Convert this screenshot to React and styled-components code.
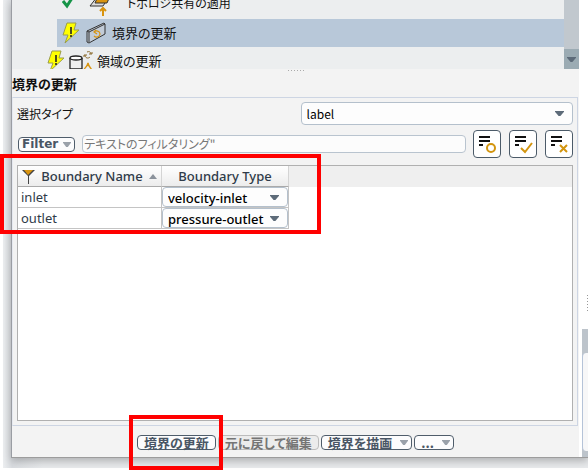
import React from 'react'
import styled, { createGlobalStyle, css } from 'styled-components'

const GlobalStyle = createGlobalStyle`
  * { box-sizing: border-box; }
  body {
    margin: 0;
    background: #fff;
    color: #111;
    font: 13px/20px 'Noto Sans', 'Noto Sans CJK JP', sans-serif;
    overflow: hidden;
  }
  button, input, select { font: inherit; margin: 0; }
`

const jp = css`
  font-family: 'Noto Sans CJK JP', sans-serif;
  font-feature-settings: 'palt';
`

const Page = styled.div`
  position: relative;
  padding: 0 0 2px 3px;
`

const Backdrop = styled.div`
  padding: 0 0 10px 8px;
  background: linear-gradient(90deg, #eceef0, #d9dce0 9px, #e8eaec 40px);
`

const Window = styled.div`
  display: flex;
  border-left: 1px solid #9a9da3;
  border-bottom: 1px solid #9c9c9c;
  background: #fff;
  box-shadow: 0 3px 8px rgba(0, 0, 0, 0.25);
`

const Main = styled.main`
  flex: 1;
  min-width: 0;
  background: #f3f3f3;
`

const TreeArea = styled.div`
  display: flex;
  height: 69px;
  overflow: hidden;
  background: #eceeef;
`

const TreeList = styled.ul`
  flex: 1;
  margin: -13px 0 0;
  padding: 0;
  list-style: none;
`

const TreeItem = styled.li`
  display: flex;
  align-items: center;
  height: ${p => (p.$tall ? 32 : 28)}px;
  margin-left: ${p => p.$indent}px;
  padding-left: 5px;
  gap: ${p => p.$gap || 4}px;
  background: ${p => (p.$selected ? '#b8c8d9' : 'none')};
  white-space: nowrap;
  ${jp}
  font-size: ${p => (p.$tall ? 12 : 13)}px;
  svg { flex: none; }
`

const Scroll = styled.div`
  display: flex;
  flex-direction: column;
  justify-content: flex-end;
  width: 15px;
  background: #c1c8ce;
`

const ScrollDown = styled.button`
  display: flex;
  align-items: center;
  justify-content: center;
  height: 20px;
  padding: 0;
  border: 0;
  background: #9babb3;
`

const Splitter = styled.div`
  display: flex;
  justify-content: center;
  gap: 2px;
  height: 5px;
  padding-top: 1px;
  i { width: 1px; height: 1px; background: #aaa; }
`

const Title = styled.h1`
  margin: 0;
  height: 23px;
  font-size: 13px;
  font-weight: 700;
  line-height: 20px;
  ${jp}
`

const Group = styled.section`
  margin-right: 1px;
  padding: 4px;
  border: 1px solid #cdd5e3;
  border-left-color: #e6e9f0;
`

const Field = styled.div`
  display: flex;
  align-items: center;
  justify-content: space-between;
  font-size: 12px;
  label { ${jp} }
  select { font-family: 'Noto Sans CJK JP', sans-serif; }
`

const SelectWrap = styled.div`
  display: flex;
  align-items: center;
  width: ${p => p.$width || '100%'};
  height: ${p => p.$height}px;
  padding-right: ${p => p.$end}px;
  border: 1px solid #b4c0cc;
  border-radius: 4px;
  background: #fdfdfd;
  select {
    flex: 1;
    min-width: 0;
    height: 100%;
    padding: 0 0 0 5px;
    border: 0;
    outline: 0;
    appearance: none;
    background: none;
    color: #000;
    font-weight: ${p => p.$weight || 400};
  }
`

const FilterRow = styled.div`
  display: flex;
  align-items: center;
  gap: 7px;
  margin: 5px 0 7px;
  padding-left: 1px;
`

const PillButton = styled.button`
  display: flex;
  align-items: center;
  justify-content: center;
  gap: ${p => (p.$latin ? 5 : 8)}px;
  height: 15px;
  padding: 0 ${p => (p.$menu ? 3 : 6)}px 0 ${p => (p.$latin ? 3 : 6)}px;
  border: 1px solid #4f5d6b;
  border-radius: 4px;
  background: #fcfcfd;
  color: #4a5665;
  ${jp}
  font-family: ${p => (p.$latin ? "'DejaVu Sans'" : "'Noto Sans CJK JP'")}, sans-serif;
  font-size: ${p => (p.$latin ? 12 : 13)}px;
  font-weight: 700;
  line-height: 13px;
  white-space: nowrap;
  &:disabled {
    border-color: #bcbcbc;
    background: #ececec;
    color: #757575;
  }
`

const FilterInput = styled.input`
  flex: 1;
  min-width: 0;
  height: 18px;
  padding: 0 1px;
  border: 1px solid #b9c4cf;
  border-radius: 4px;
  background: #fcfcfc;
  && {
    ${jp}
    font-size: 12px;
  }
  &::placeholder { color: #777; opacity: 1; }
`

const Tools = styled.div`
  display: flex;
  gap: 8px;
`

const ToolButton = styled.button`
  width: 28px;
  height: 28px;
  padding: 0;
  border: 1px solid #4c5b69;
  border-radius: 4px;
  background: #fff;
  svg { display: block; }
`

const TableBox = styled.div`
  height: 256px;
  border: 1px solid #b0b0b0;
  background: linear-gradient(#efefef 21px, #fff 21px);
`

const Table = styled.table`
  width: 271px;
  table-layout: fixed;
  border-collapse: separate;
  border-spacing: 0;
  color: #2f3b49;
  th, td {
    height: 21px;
    padding: 0;
    border-right: 1px solid #c4c4c4;
    border-bottom: 1px solid #c4c4c4;
    line-height: 20px;
  }
  th {
    border-right-color: #d4d4d4;
    border-bottom-color: #aaa;
    background: linear-gradient(#fff, #ececec);
    font-weight: 500;
  }
  th:first-child { width: 144px; }
  td:first-child { padding-left: 3px; }
  td { background: #fff; }
`

const HeadCell = styled.div`
  display: flex;
  align-items: center;
  justify-content: space-between;
  height: 20px;
  padding: 0 4px;
`

const Footer = styled.footer`
  display: flex;
  justify-content: center;
  gap: 2px;
  padding: 9px 0 7px;
`

const Side = styled.aside`
  display: flex;
  flex-direction: column;
  justify-content: flex-end;
  width: 9px;
  padding-left: 3px;
`

const SideHandle = styled.div`
  display: flex;
  flex-direction: column;
  align-items: flex-end;
  gap: 2px;
  margin-bottom: 18px;
  i { width: 1px; height: 1px; background: #999; }
`

const SidePanel = styled.div`
  padding: 24px 0 6px;
  background: #bdc4cb;
  div {
    height: 98px;
    border-left: 1px solid #b5c3d8;
    border-radius: 4px 0 0 4px;
    background: #f7f7f8;
  }
`

// red frames drawn over the window
const Highlight = styled.div`
  position: absolute;
  left: ${p => p.$x}px;
  top: ${p => p.$y}px;
  width: ${p => p.$w}px;
  height: ${p => p.$h}px;
  border: 4px solid #f00;
  pointer-events: none;
`

const Arrow = ({ color = '#5d6b79', w = 9, up }) => (
  <svg width={w} height="5" viewBox="0 0 10 6" preserveAspectRatio="none">
    <path d={up ? 'M0 6 5 0l5 6z' : 'M0 0h10v1L6 6H4L0 1z'} fill={color} />
  </svg>
)

const Bolt = () => (
  <svg width="18" height="22" viewBox="0 0 18 22">
    <path d="M5 1h9l-2 7h5L3 21l3-8H1z" fill="#ff0" stroke="#9a9d4c" strokeWidth="1" />
    <path d="M9 5v7M9 13v2" stroke="#222" strokeWidth="1.6" />
  </svg>
)

const CheckIcon = () => (
  <svg width="13" height="22" viewBox="0 0 13 22">
    <path d="m1 9 4 5 7-11" fill="none" stroke="#159447" strokeWidth="3" />
  </svg>
)

const TopologyIcon = () => (
  <svg width="24" height="28" viewBox="0 0 24 28">
    <path d="M1 17 8 8h12l-6 9z" fill="#ddd" stroke="#333" />
    <path d="M6 14 10 5h12l-4 9z" fill="#d9940f" stroke="#333" />
    <path d="M14 27v-7M11 22l3-3 3 3" fill="none" stroke="#d9940f" strokeWidth="2" />
  </svg>
)

const BoundaryIcon = () => (
  <svg width="22" height="24" viewBox="0 0 22 24">
    <path d="M2 10 19 2l1 1v10L4 22l-2-1z" fill="#c2ccd8" stroke="#333" />
    <path d="M2 10l2 1L20 3M4 11v10" fill="none" stroke="#333" />
    <path d="M9 11c2-2 6-1 6 2s-4 4-6 2M11 9l-2 2 3 2" fill="none" stroke="#d9940f" strokeWidth="1.2" />
  </svg>
)

const RegionIcon = () => (
  <svg width="24" height="24" viewBox="0 0 24 24">
    <path d="M1 9v11h12V9" fill="#eee" stroke="#222" strokeWidth="1.3" />
    <ellipse cx="7" cy="9" rx="6" ry="2" fill="#fff" stroke="#222" strokeWidth="1.3" />
    <path d="M18 3c2-1 4 0 4 2M20 5h3V3M16 6c0 3 3 4 5 2M15 8V6h3" fill="none" stroke="#8a6a2c" />
    <path d="M15 22c0-4 3-3 4-8 1 5 3 4 4 8" fill="none" stroke="#d9940f" strokeWidth="1.4" />
  </svg>
)

const FunnelIcon = () => (
  <svg width="13" height="15" viewBox="0 0 13 15">
    <path d="M0 1h13L7 7v8H6V7z" fill="#444" />
    <path d="M2 1h9L6 6z" fill="#d9940f" />
  </svg>
)

const marks = {
  circle: <circle cx="17" cy="17" r="4" />,
  check: <path d="m11 17 4 4 7-9" />,
  cross: <path d="m14 14 7 7M21 14l-7 7" />,
}

const ListIcon = ({ mark }) => (
  <svg width="26" height="26" viewBox="0 0 26 26">
    <path d="M5 6h11M5 10h11M5 14h4" stroke="#111" strokeWidth="2" />
    <g fill="none" stroke="#d3950f" strokeWidth="2">{marks[mark]}</g>
  </svg>
)

const dots = [0, 1, 2, 3, 4, 5]

const tools = [
  { mark: 'circle', label: 'Clear selection' },
  { mark: 'check', label: 'Select all' },
  { mark: 'cross', label: 'Deselect all' },
]

const boundaries = [
  { name: 'inlet', type: 'velocity-inlet' },
  { name: 'outlet', type: 'pressure-outlet' },
]

const App = () => {
  return (
    <Page>
      <GlobalStyle />
      <Backdrop>
        <Window>
          <Main>
            <TreeArea>
              <TreeList>
                <TreeItem $indent={45} $gap={14} $tall><CheckIcon /><TopologyIcon />トポロジ共有の適用</TreeItem>
                <TreeItem $indent={45} $gap={5} $selected><Bolt /><BoundaryIcon />境界の更新</TreeItem>
                <TreeItem $indent={30}><Bolt /><RegionIcon />領域の更新</TreeItem>
              </TreeList>
              <Scroll>
                <ScrollDown aria-label="Scroll down"><Arrow /></ScrollDown>
              </Scroll>
            </TreeArea>
            <Splitter>{dots.map(d => <i key={d} />)}</Splitter>
            <Title>境界の更新</Title>
            <Group>
              <Field>
                <label htmlFor="selection-type">選択タイプ</label>
                <SelectWrap $width="49%" $height={23} $end={8}>
                  <select id="selection-type"><option>label</option></select>
                  <Arrow />
                </SelectWrap>
              </Field>
              <FilterRow>
                <PillButton $latin $menu>Filter<Arrow color="#9aa1aa" w={8} /></PillButton>
                <FilterInput aria-label="Filter" placeholder={'テキストのフィルタリング"'} />
                <Tools>
                  {tools.map(t => (
                    <ToolButton key={t.mark} aria-label={t.label}><ListIcon mark={t.mark} /></ToolButton>
                  ))}
                </Tools>
              </FilterRow>
              <TableBox>
                <Table>
                  <thead>
                    <tr>
                      <th><HeadCell><FunnelIcon />Boundary Name<Arrow up w={8} color="#8b929b" /></HeadCell></th>
                      <th>Boundary Type</th>
                    </tr>
                  </thead>
                  <tbody>
                    {boundaries.map(b => (
                      <tr key={b.name}>
                        <td>{b.name}</td>
                        <td>
                          <SelectWrap $height={20} $end={8} $weight={500}>
                            <select aria-label={b.name}><option>{b.type}</option></select>
                            <Arrow />
                          </SelectWrap>
                        </td>
                      </tr>
                    ))}
                  </tbody>
                </Table>
              </TableBox>
            </Group>
            <Footer>
              <PillButton>境界の更新</PillButton>
              <PillButton disabled>元に戻して編集</PillButton>
              <PillButton $menu>境界を描画<Arrow color="#9aa1aa" w={8} /></PillButton>
              <PillButton $menu>...<Arrow color="#9aa1aa" w={8} /></PillButton>
            </Footer>
          </Main>
          <Side>
            <SideHandle>{dots.map(d => <i key={d} />)}</SideHandle>
            <SidePanel><div /></SidePanel>
          </Side>
        </Window>
      </Backdrop>
      <Highlight $x={0} $y={154} $w={321} $h={80} />
      <Highlight $x={129} $y={415} $w={94} $h={55} />
    </Page>
  )
}

export default App
